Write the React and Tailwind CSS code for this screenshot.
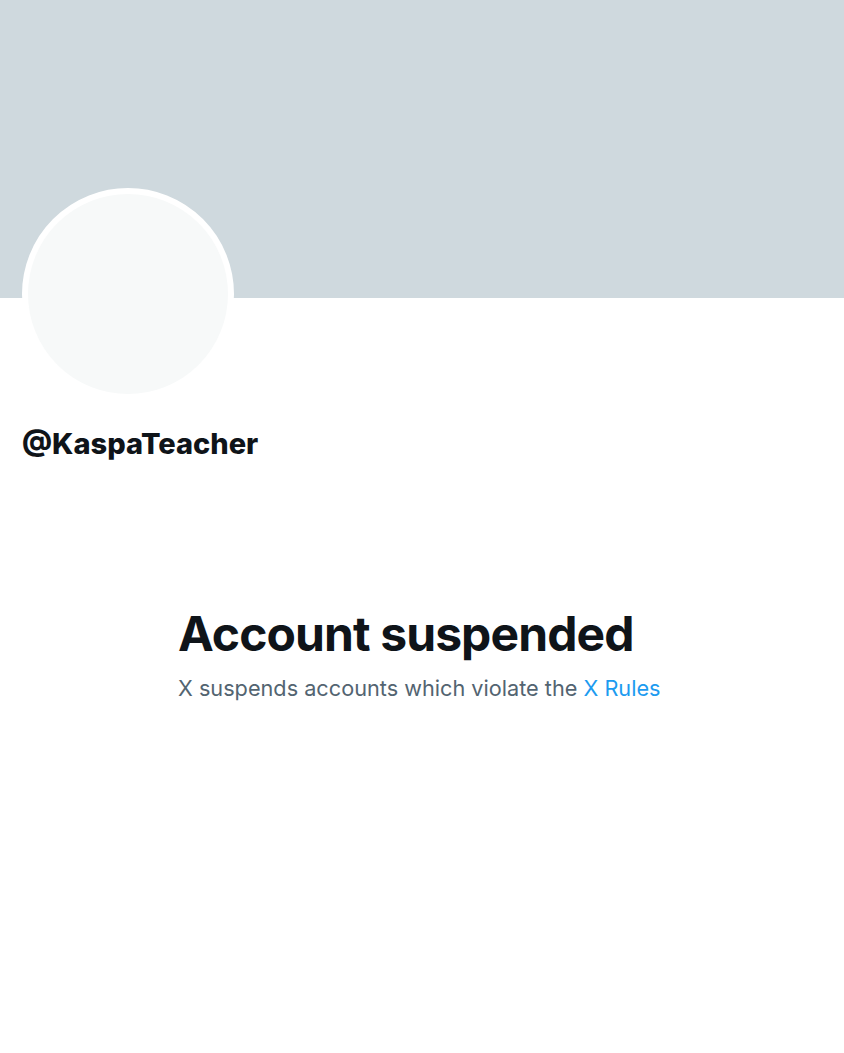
export default function App() {
  return (
    <div className="min-h-[1053px] bg-white font-['Inter','Noto_Sans',sans-serif] text-[#0f1419]">
      <div className="h-[298px] bg-[#cfd9de]" />
      <div className="px-[22px]">
        <div className="-mt-[110px] h-[212px] w-[212px] rounded-full border-[6px] border-white bg-[#f7f9f9]" />
        <h2 className="mt-[26px] text-[29px] font-extrabold leading-[36px]">@KaspaTeacher</h2>
      </div>
      <div className="mx-auto mt-[144px] w-[488px]">
        <h1 className="whitespace-nowrap text-[48px] font-bold leading-[56px] tracking-[-0.9px]">Account suspended</h1>
        <p className="mt-[12px] whitespace-nowrap text-[21.7px] leading-[28px] text-[#536471]">
          X suspends accounts which violate the <span className="text-[#1d9bf0]">X Rules</span>
        </p>
      </div>
    </div>
  );
}
